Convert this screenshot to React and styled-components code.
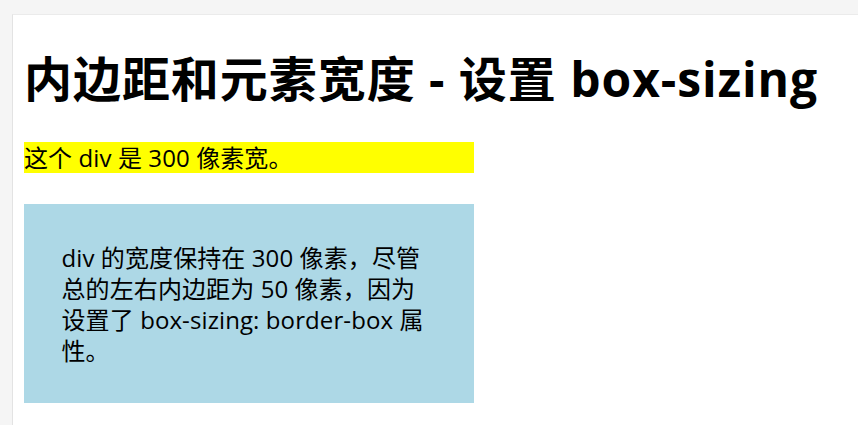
import React from "react";
import styled, { createGlobalStyle } from "styled-components";

const GlobalStyle = createGlobalStyle`
  html, body {
    margin: 0;
    padding: 0;
    background: #f5f5f5;
  }
  body {
    font-family: "Open Sans", "Noto Sans CJK SC", sans-serif;
    color: #000;
  }
`;

const Frame = styled("div")`
  margin: 14px 0 0 12px;
  min-height: 411px;
  background: #ffffff;
  border-top: 1px solid #ebebeb;
  border-left: 1px solid #e3e3e3;
  box-sizing: border-box;
  padding: 32px 12px 12px 11px;
`;

const Title = styled("h1")`
  margin: 0 0 32px;
  font-size: 48px;
  line-height: 63px;
  font-weight: 700;
  letter-spacing: 0.95px;
  white-space: nowrap;
`;

const WideBox = styled("div")`
  width: 450px;
  box-sizing: border-box;
  font-size: 24px;
  line-height: 31px;
  letter-spacing: 0.1px;
  background: ${(p) => p.bg};
  padding: ${(p) => (p.padded ? "37.5px" : "0")};
  margin-bottom: 31px;
`;

function App() {
  return (
    <>
      <GlobalStyle />
      <Frame>
        <Title>内边距和元素宽度 - 设置 box-sizing</Title>
        <WideBox bg="#ffff00">这个 div 是 300 像素宽。</WideBox>
        <WideBox bg="#add8e6" padded>
          div 的宽度保持在 300 像素，尽管总的左右内边距为 50 像素，因为设置了 box-sizing: border-box 属性。
        </WideBox>
      </Frame>
    </>
  );
}

export default App;
